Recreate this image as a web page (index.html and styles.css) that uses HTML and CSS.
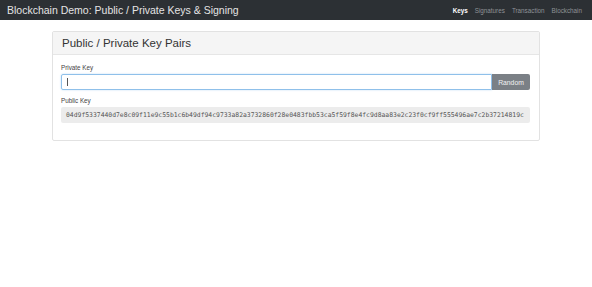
FILE: index.html
```html
<!DOCTYPE html>
<html lang="en">
  <head>
    <meta charset="UTF-8" />
    <meta name="viewport" content="width=device-width, initial-scale=1.0" />
    <title>Blockchain Demo: Public / Private Keys &amp; Signing</title>
    <link rel="stylesheet" href="styles.css">
  </head>
  <body>
    <nav class="navbar">
      <div class="brand">Blockchain Demo: Public / Private Keys &amp; Signing</div>
      <ul class="nav_links">
        <li class="active">Keys</li>
        <li>Signatures</li>
        <li>Transaction</li>
        <li>Blockchain</li>
      </ul>
    </nav>
    <div class="container">
      <div class="panel">
        <div class="panel_heading">Public / Private Key Pairs</div>
        <div class="panel_body">
          <label class="field_label">Private Key</label>
          <div class="input_group">
            <div class="key_input"><span class="caret"></span></div>
            <button class="random_btn" type="button">Random</button>
          </div>
          <label class="field_label">Public Key</label>
          <div class="pubkey">04d9f5337440d7e8c09f11e9c55b1c6b49df94c9733a82a3732860f28e0483fbb53ca5f59f8e4fc9d8aa83e2c23f0cf9ff555496ae7c2b37214819c</div>
        </div>
      </div>
    </div>
  </body>
</html>
```

FILE: styles.css
```css
body {
  margin: 0px;
  background-color: #fff;
  font-family: "Liberation Sans", Arial, sans-serif;
  color: #333;
}
.navbar {
  display: flex;
  justify-content: space-between;
  align-items: center;
  height: 20px;
  background-color: #2c3034;
  padding: 0 10px 0 7px;
}
.brand {
  color: #e4e4e4;
  font-size: 10.5px;
}
.nav_links {
  display: flex;
  list-style: none;
  margin: 0;
  padding: 0;
  gap: 7px;
  font-size: 6.3px;
  color: #8f9296;
}
.nav_links .active {
  color: #fff;
  font-weight: bold;
}
.container {
  width: 488px;
  margin: 11px auto 0;
}
.panel {
  border: 1px solid #e2e2e2;
  border-radius: 2px;
  background-color: #fff;
}
.panel_heading {
  height: 22px;
  line-height: 22px;
  padding: 0 9px;
  background-color: #f5f5f5;
  border-bottom: 1px solid #e6e6e6;
  font-size: 11.5px;
  color: #333;
}
.panel_body {
  padding: 9px 9px 17px 8px;
}
.field_label {
  display: block;
  font-size: 6.3px;
  color: #444;
  margin-bottom: 3px;
}
.input_group {
  display: flex;
  height: 16px;
  margin-bottom: 7px;
}
.key_input {
  flex: 1;
  box-sizing: border-box;
  border: 1px solid #8fc0ea;
  border-radius: 2px 0 0 2px;
  box-shadow: 0 0 2px #b9d9f3;
  display: flex;
  align-items: center;
  padding-left: 5px;
}
.caret {
  width: 1px;
  height: 8px;
  background-color: #555;
}
.random_btn {
  width: 38px;
  border: none;
  border-radius: 0 2px 2px 0;
  background-color: #7b8086;
  color: #f2f2f2;
  font-family: "Liberation Sans", Arial, sans-serif;
  font-size: 6.8px;
  padding: 0;
}
.pubkey {
  box-sizing: border-box;
  height: 16px;
  line-height: 16px;
  padding: 0 0 0 5px;
  background-color: #ececec;
  border-radius: 2px;
  font-family: "DejaVu Sans Mono", monospace;
  font-size: 6.4px;
  color: #555;
  white-space: nowrap;
  overflow: hidden;
}
```
